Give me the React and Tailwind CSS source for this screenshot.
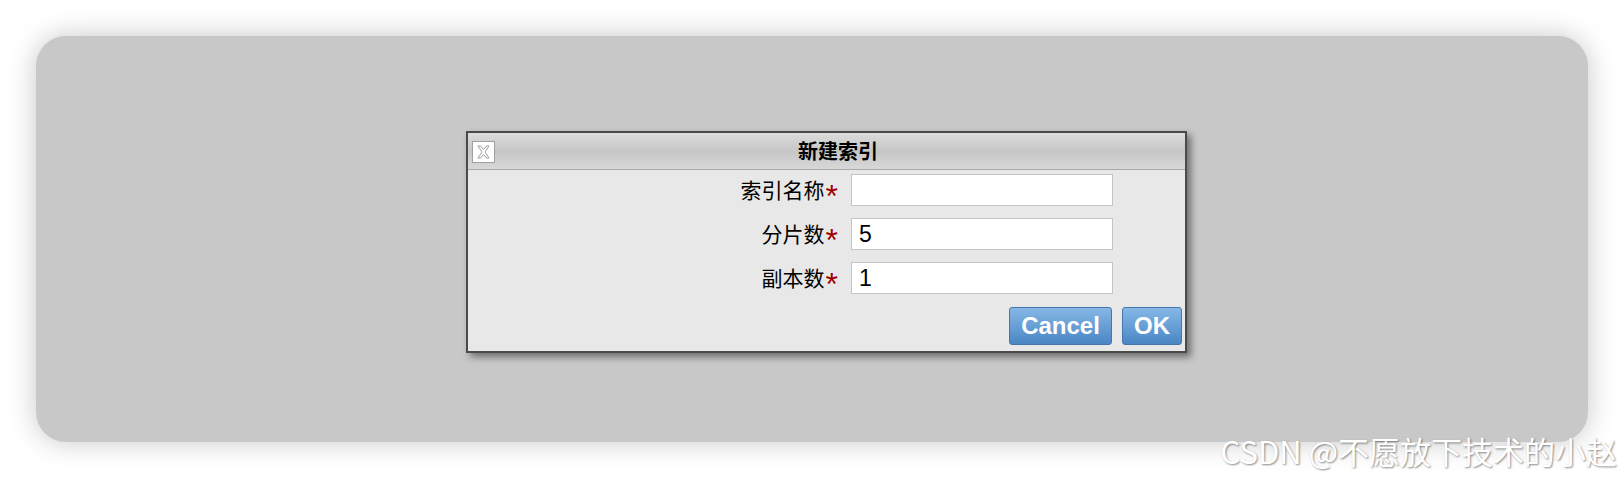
import React from 'react'

const cjk = { fontFamily: '"Noto Sans CJK SC", "Noto Sans", sans-serif' }
const arial = { fontFamily: '"Liberation Sans", Arial, sans-serif' }

function CloseIcon() {
  return (
    <svg width="23" height="22" viewBox="0 0 23 22">
      <rect x="0.5" y="0.5" width="22" height="21" fill="#fff" stroke="#a0a0a0" />
      <path
        d="M6 5 L8.5 5 L11.5 8.5 L14.5 5 L17 5 L13 11 L17 17 L14.5 17 L11.5 13.5 L8.5 17 L6 17 L10 11 Z"
        fill="#fff"
        stroke="#9a9a9a"
        strokeWidth="1"
        strokeLinejoin="round"
      />
    </svg>
  )
}

function Row({ label, value }) {
  return (
    <div className="flex items-center h-[32px]">
      <div className="w-[383px] flex items-center justify-end text-[21px] text-black pr-[13px]" style={cjk}>
        {label}
        <span className="ml-[1px] text-[32px] leading-none text-[#a00000] translate-y-[6px]" style={arial}>*</span>
      </div>
      <input
        defaultValue={value}
        className="w-[262px] h-[32px] bg-white border border-[#c4c4c4] px-[7px] text-[23px] text-black outline-none"
        style={arial}
      />
    </div>
  )
}

export default function App() {
  return (
    <div className="relative w-[1624px] h-[478px] bg-white p-[36px] overflow-hidden">
      <div className="h-[406px] rounded-[30px] bg-[#c8c8c8] shadow-[0_0_28px_rgba(0,0,0,0.22)] flex pl-[430px] pt-[95px]">
        {/* dialog */}
        <div className="w-[721px] h-[222px] border-2 border-[#4a4a4a] bg-[#e8e8e8] shadow-[4px_4px_7px_rgba(0,0,0,0.45)] flex flex-col">
          <div className="h-[37px] flex items-center border-b border-[#a8a8a8] bg-gradient-to-b from-[#dcdcdc] via-[#c6c6c6] to-[#d8d8d8]">
            <div className="pl-[4px] pt-[1px] flex">
              <CloseIcon />
            </div>
            <div className="flex-1 text-center text-[20px] font-bold text-black pr-[4px]" style={cjk}>
              新建索引
            </div>
          </div>
          <div className="flex flex-col gap-[12px] pt-[4px]">
            <Row label="索引名称" value="" />
            <Row label="分片数" value="5" />
            <Row label="副本数" value="1" />
          </div>
          <div className="flex justify-end gap-[10px] pr-[3px] mt-[13px]">
            <button
              className="w-[103px] h-[38px] rounded-[3px] border border-[#4576ad] bg-gradient-to-b from-[#86b8e6] to-[#4a86c4] text-white font-bold text-[24px]"
              style={arial}
            >
              Cancel
            </button>
            <button
              className="w-[60px] h-[38px] rounded-[3px] border border-[#4576ad] bg-gradient-to-b from-[#86b8e6] to-[#4a86c4] text-white font-bold text-[24px]"
              style={arial}
            >
              OK
            </button>
          </div>
        </div>
      </div>
      <div
        className="absolute right-[7px] bottom-[12px] text-[31px] font-normal text-white leading-none [text-shadow:1px_1px_2px_rgba(0,0,0,0.45)]"
        style={cjk}
      >
        CSDN @不愿放下技术的小赵
      </div>
    </div>
  )
}
